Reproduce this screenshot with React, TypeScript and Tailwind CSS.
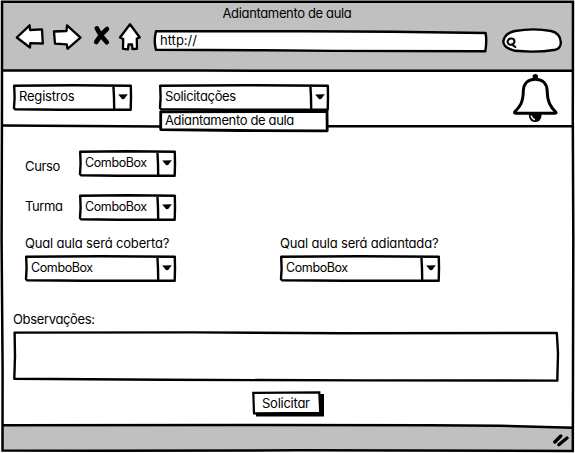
import type { ReactNode } from "react";

const label = "block whitespace-nowrap leading-[16px]";

/** Hand-drawn rectangle that fills its parent. */
function Outline({ w, h, d, stroke = 2.4 }: { w: number; h: number; d: string; stroke?: number }) {
  return (
    <svg className="absolute inset-0 overflow-visible" width={w} height={h} viewBox={`0 0 ${w} ${h}`} aria-hidden="true">
      <path d={d} fill="#fff" stroke="#000" strokeWidth={stroke} strokeLinejoin="round" />
    </svg>
  );
}

function Combo({ w, h = 27, children, textClass = "mt-px text-[12.5px] tracking-[-0.4px]" }: { w: number; h?: number; children: ReactNode; textClass?: string }) {
  return (
    <button type="button" className="relative flex shrink-0 items-start text-left" style={{ width: w, height: h }}>
      <Outline
        w={w}
        h={h}
        d={`M1.2 1.8 L${w * 0.5} 1.2 L${w - 1.2} 1.7 L${w - 1} ${h * 0.5} L${w - 1.3} ${h - 1.2} L${w * 0.4} ${h - 1.2} L2 ${h - 1.8} L1 ${h - 3} L1.6 ${h * 0.5} Z M${w - 18.6} 1.5 L${w - 18} ${h * 0.5} L${w - 17.8} ${h - 1.5}`}
      />
      <span className={`relative grow pl-[6px] pt-[4px] ${label} ${textClass}`}>{children}</span>
      <svg className="relative mr-[4px] mt-[10px] shrink-0" width="10" height="6" viewBox="0 0 10 6" aria-hidden="true">
        <path d="M.2 .4 L9.8 .2 L6.2 5 L4.2 5.2 Z" fill="#000" />
      </svg>
    </button>
  );
}

function Toolbar() {
  return (
    <svg className="shrink-0" width="128" height="30" viewBox="14 22 128 30" aria-hidden="true">
      <g fill="#fff" stroke="#000" strokeWidth="2.3" strokeLinejoin="round">
        <path d="M16.8 37.5 L29.6 25.3 L30 30 L42 29.3 L42.8 43.5 L30.3 43.2 L30 47.5 Z" />
        <path d="M54 31.5 L66.5 31 L67 25.3 L80.5 37.6 L67.5 48.8 L66.7 44.3 L55 43.6 Z" />
        <path d="M130 24.3 L139.8 37.5 L136.8 38.5 L137 48.8 L132.5 49 L132 44.5 L128.5 44.5 L128 49.3 L123 48.8 L123.2 39 L120 37.5 Z" />
      </g>
      <path d="M96.8 28.3 Q100 35 106.8 42.3 M107 29 Q101 34 96.2 42" fill="none" stroke="#000" strokeWidth="4.6" strokeLinecap="round" />
    </svg>
  );
}

function Bell() {
  return (
    <svg className="shrink-0" width="46" height="50" viewBox="512 73 46 50" aria-hidden="true">
      <circle cx="535.3" cy="76.7" r="2.7" />
      <circle cx="535.2" cy="115.8" r="6.3" />
      <path d="M531.2 115.5 Q531.7 118.8 535 119.8" fill="none" stroke="#fff" strokeWidth="1.5" />
      <path
        d="M535.3 79.2 C527.5 79.2 523.5 84 523.3 91 C523.2 103 519.5 107 514.8 111.8 Q514 113.3 516 113.3 L554.5 113.3 Q557 113.3 555.5 111.8 C550.5 107 547.4 102 547.2 91 C547 84 543 79.2 535.3 79.2 Z"
        fill="#fff"
        stroke="#000"
        strokeWidth="3"
        strokeLinejoin="round"
      />
    </svg>
  );
}

export default function App() {
  return (
    <div className="relative flex h-[453px] w-[575px] flex-col overflow-hidden bg-white font-['Inter','Noto_Sans',sans-serif] text-[13px] text-black [font-feature-settings:'cv11'] [&_button]:[font-feature-settings:'cv11']">
      <header className="mx-[2px] mt-[2px] h-[68px] shrink-0 bg-[#c0c0c0]">
        <h1 className={`pl-[220.5px] pt-[3px] text-[13px] tracking-[-0.35px] ${label}`}>Adiantamento de aula</h1>
        <div className="flex items-start pl-[12px] pt-px">
          <Toolbar />
          <div className="relative ml-[11px] mt-[8px] h-[22px] w-[335px] shrink-0">
            <Outline w={335} h={22} d="M3 1.3 L150 1.2 L240 1.8 L332.6 3 Q334 11 332.3 21.3 L180 20.9 L110 20.3 L3 19.8 Q.5 11 3 1.3 Z" />
            <span className={`relative pl-[7px] pt-[2px] ${label}`}>http://</span>
          </div>
          <div className="relative ml-[14px] mt-[6px] h-[25px] w-[61px] shrink-0">
            <Outline w={61} h={25} d="M13 3 Q32 -.2 49 3 Q58 5 58.8 14 Q59 20 53.5 21.7 Q35 24.8 13 22.8 Q1.5 20 1.3 13.5 Q2.5 5 13 3 Z" />
            <svg className="relative ml-[3px] mt-[9px]" width="13" height="13" viewBox="0 0 13 13" aria-hidden="true">
              <path d="M6.6 1.5 Q10 2 9.3 5.3 Q8 8.5 4.4 7.5 Q1.3 5.5 3.4 2.8 Q4.8 1.2 6.6 1.5 M7 7.5 L10.3 10" fill="none" stroke="#000" strokeWidth="2.1" strokeLinecap="round" />
            </svg>
          </div>
        </div>
      </header>

      <nav className="flex h-[56px] shrink-0 items-start pl-[13px] pt-[14px]">
        <Combo w={119} textClass="tracking-[-0.2px]">Registros</Combo>
        <div className="relative z-10 ml-[27px] w-[170px] shrink-0">
          <Combo w={170} textClass="tracking-[-0.32px]">Solicitações</Combo>
          <div className="relative -mt-px h-[22px]">
            <Outline w={170} h={22} stroke={2.8} d="M1.7 1.8 L168 1.4 L168.2 20.8 L80 20.5 L1.7 19.6 Z" />
            <span className={`relative pl-[6px] pt-[2px] tracking-[-0.35px] ${label}`}>Adiantamento de aula</span>
          </div>
        </div>
        <div className="-mt-[11px] ml-[183px]">
          <Bell />
        </div>
      </nav>

      <main className="flex h-[299px] shrink-0 flex-col items-start">
        <div className="flex pl-[25px] pt-[24px]">
          <span className={`w-[54px] pt-[8px] tracking-[-0.35px] ${label}`}>Curso</span>
          <Combo w={97}>ComboBox</Combo>
        </div>
        <div className="mt-[17px] flex pl-[25px]">
          <span className={`w-[54px] pt-[4px] tracking-[-0.4px] ${label}`}>Turma</span>
          <Combo w={97}>ComboBox</Combo>
        </div>
        <div className="mt-[14px] flex pl-[25px]">
          <div className="w-[255px]">
            <span className={`tracking-[-0.17px] ${label}`}>Qual aula será coberta?</span>
            <div className="pt-[4px]"><Combo w={151}>ComboBox</Combo></div>
          </div>
          <div>
            <span className={`tracking-[-0.18px] ${label}`}>Qual aula será adiantada?</span>
            <div className="pt-[4px]"><Combo w={160}>ComboBox</Combo></div>
          </div>
        </div>
        <span className={`mt-[29px] pl-[13px] tracking-[-0.35px] ${label}`}>Observações:</span>
        <div className="relative ml-[13px] mt-[4px] h-[51px] w-[546px] shrink-0">
          <Outline w={546} h={51} d="M1.6 1.6 L180 1.4 L330 2.2 L543.8 2 L545 22 L544.3 49.6 L350 49.4 L150 48.8 L1.3 47.8 L2 25 Z" />
        </div>
        <button type="button" className="relative ml-[252px] mt-[9px] flex h-[26px] w-[73px] shrink-0 items-start">
          <svg className="absolute inset-0" width="73" height="26" viewBox="0 0 73 26" aria-hidden="true">
            <path d="M4 3 L72 3 L72 25.5 L4 25.5 Z" />
            <path d="M1.3 1.8 L67.3 1.4 L68.2 21.8 L2 22.4 Z" fill="#fff" stroke="#000" strokeWidth="2.2" />
          </svg>
          <span className={`relative pl-[10px] pt-[4px] tracking-[-0.25px] ${label}`}>Solicitar</span>
        </button>
      </main>

      <footer className="mx-[2px] flex h-[26px] shrink-0 items-start justify-end bg-[#c0c0c0] pr-[4px] pt-[8px]">
        <svg width="18" height="14" viewBox="551 433 18 14" aria-hidden="true">
          <path d="M554.8 442 L560.8 436 M558.8 444.8 L567 438" stroke="#000" strokeWidth="3.3" strokeLinecap="round" />
        </svg>
      </footer>

      <svg className="pointer-events-none absolute inset-0" width="575" height="453" viewBox="0 0 575 453" aria-hidden="true">
        <path d="M3 423 L250 423 L573 423 L573 427 L470 425 L250 425 L3 425.5 Z" fill="#fff" />
        <g fill="none" stroke="#000" strokeWidth="2.5">
          <path d="M2 1.7 L573 1.8 L572.8 120 L573.3 240 L572.8 451 L300 450.3 L100 450.8 L2.5 450.5 L2.6 370 L1.6 240 L2 100 Z" />
          <path d="M2 70.4 L200 70.6 L573 70.8" />
          <path d="M2 125.5 L160 126.4 M328 126.3 L573 126.2" />
          <path d="M2 425.3 L250 425 L430 425.2 L500 425.8 L573 427.8" />
        </g>
      </svg>
    </div>
  );
}
